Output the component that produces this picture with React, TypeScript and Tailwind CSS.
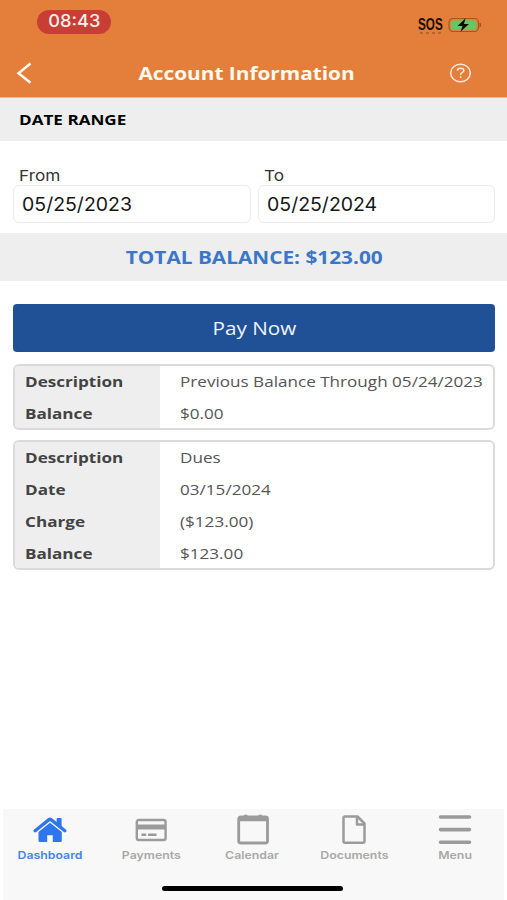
const cards = [
  [
    { label: "Description", value: "Previous Balance Through 05/24/2023" },
    { label: "Balance", value: "$0.00" },
  ],
  [
    { label: "Description", value: "Dues" },
    { label: "Date", value: "03/15/2024" },
    { label: "Charge", value: "($123.00)" },
    { label: "Balance", value: "$123.00" },
  ],
];

const HomeIcon = () => (
  <svg className="h-7 w-[34px]" viewBox="0 0 34 28" fill="#2f75ee">
    <path d="M23.6 3q0-1 1-1h3q1 0 1 1V12l-5-4.3z" />
    <path
      d="M2.2 14.7 16 3.6q1-.8 2 0l13.800 11.100"
      fill="none"
      stroke="#2f75ee"
      strokeWidth="3.300"
      strokeLinecap="round"
      strokeLinejoin="round"
    />
    <path d="M17 6.800 28.800 16v8.700q0 1.300-1.500 1.300h-7.500v-6.800h-5.600v6.800H7Q5.500 26 5.500 24.700V16z" />
  </svg>
);

const CardIcon = () => (
  <svg className="h-7 w-[34px]" viewBox="0 0 34 28" fill="#9b9b9b">
    <rect x="2.800" y="4" width="28.800" height="20" rx="2" fill="none" stroke="#9b9b9b" strokeWidth="2.400" />
    <path d="M2 8.600h30v5H2zM7.500 17.400h4.700v2.600H7.500zM14 17.400h8.500v2.600H14z" />
  </svg>
);

const CalendarIcon = () => (
  <svg className="h-8 w-[34px]" viewBox="0 0 34 32" fill="#9b9b9b">
    <rect x="2.700" y="3" width="28.800" height="26" rx="2" fill="none" stroke="#9b9b9b" strokeWidth="2.800" />
    <path d="M3 2.500h28v4.700H3zM8 .8h3.500v3H8zM22.500.8H26v3h-3.500z" />
  </svg>
);

const DocumentIcon = () => (
  <svg className="h-8 w-[26px]" viewBox="0 0 26 32" fill="none" stroke="#9b9b9b" strokeWidth="2.500" strokeLinejoin="round">
    <path d="M4 2.500h12.500l7 7v17.700q0 1.500-1.500 1.500H4q-1.500 0-1.500-1.500V4Q2.500 2.500 4 2.500z" />
    <path d="M16 2.500v8h7.500" />
  </svg>
);

const MenuIcon = () => (
  <svg className="h-8 w-[34px]" viewBox="0 0 34 32" stroke="#9b9b9b" strokeWidth="3.600" strokeLinecap="round">
    <path d="M2.500 3h29M2.500 15.600h29M2.500 28.200h29" />
  </svg>
);

const tabs = [
  { name: "Dashboard", icon: <HomeIcon />, color: "text-[#4584ee]" },
  { name: "Payments", icon: <CardIcon />, color: "text-[#a9a9a9]" },
  { name: "Calendar", icon: <CalendarIcon />, color: "text-[#a9a9a9]" },
  { name: "Documents", icon: <DocumentIcon />, color: "text-[#a9a9a9]" },
  { name: "Menu", icon: <MenuIcon />, color: "text-[#a9a9a9]" },
];

const DateField = ({ label, value }: { label: string; value: string }) => (
  <div className="flex-1">
    <div className="h-[21px] pl-1.5 font-[Inter,sans-serif] text-[15px] leading-[23px] text-[#333]">
      <span className="inline-block origin-left scale-x-[1.15]">{label}</span>
    </div>
    <div className="h-[38px] rounded-md border border-[#ebebeb] pl-2 font-[Inter,sans-serif] text-[19px] leading-[37px] text-[#171717]">
      <span className="inline-block origin-left scale-x-[1.025]">{value}</span>
    </div>
  </div>
);

export default function App() {
  return (
    <div className="flex h-[900px] w-[507px] flex-col overflow-hidden bg-white font-['Open_Sans',sans-serif]">
      <header className="h-[98px] shrink-0 border-b border-[#d9bfae] bg-[#e37f3a]">
        <div className="flex h-[49px] items-start justify-between pr-[25px] pl-[37px]">
          <div className="mt-[10px] flex h-6 w-[74px] items-center justify-center rounded-full bg-[#c83e35] font-[Inter,sans-serif] text-[17px] font-medium text-[#fff0e8]">
            <span className="scale-x-[1.07]">08:43</span>
          </div>
          <div className="mt-[16px] flex items-start">
            <div className="mr-[6px] w-[25px] pl-px">
              <div className="h-[15px] font-['Liberation_Sans',sans-serif] text-[16px] leading-[17px] font-bold text-[#1c0d03]">
                <span className="inline-block origin-left scale-x-[0.73]">SOS</span>
              </div>
              <div className="mt-px flex gap-[3px] pl-[2px]">
                <i className="h-[2px] w-[3px] bg-[#b8652c]" />
                <i className="h-[2px] w-[3px] bg-[#b8652c]" />
                <i className="h-[2px] w-[3px] bg-[#b8652c]" />
                <i className="h-[2px] w-[3px] bg-[#b8652c]" />
              </div>
            </div>
            <svg className="mt-px h-4 w-[34px]" viewBox="0 0 34 16">
              <rect x="1" y="1.500" width="29.500" height="13" rx="4" fill="none" stroke="#a4581f" strokeWidth="1.200" />
              <rect x="3" y="3.200" width="25.500" height="9.600" rx="2.500" fill="#68c564" />
              <path d="M32 6q1.500 2 0 4z" fill="#a4581f" stroke="#a4581f" />
              <path d="M17.500 1.200 9.500 9h5l-2 5.800L21 7h-5z" fill="#160b03" />
            </svg>
          </div>
        </div>
        <div className="flex h-[48px] items-center justify-between pr-[35px] pl-[16px]">
          <svg className="h-[22px] w-4" viewBox="0 0 16 22" fill="none" stroke="#fff8f0" strokeWidth="2.500">
            <path d="M14.500 1.500 2.500 11.300l12 9.500" />
          </svg>
          <h1 className="ml-[12px] text-lg font-bold text-[#fff8ee]">
            <span className="inline-block scale-x-[1.155]">Account Information</span>
          </h1>
          <svg className="h-5 w-[23px]" viewBox="0 0 23 20" fill="none" stroke="#ffe9d8" strokeWidth="1.500">
            <ellipse cx="11.500" cy="10" rx="9.800" ry="8.800" />
            <path d="M8.300 7.800q.2-2.600 3.300-2.600 3.300 0 3.300 2.300 0 1.300-1.800 2.200-1.500.8-1.500 2.200M11.600 13.300v1.600" />
          </svg>
        </div>
      </header>

      <div className="h-[43px] shrink-0 bg-[#eeeeee] pl-[19px] text-[15px] leading-[43px] font-bold text-black">
        <span className="inline-block origin-left scale-x-[1.14]">DATE RANGE</span>
      </div>

      <div className="flex gap-[7px] px-3 pt-[23px] pl-[13px]">
        <DateField label="From" value="05/25/2023" />
        <DateField label="To" value="05/25/2024" />
      </div>

      <div className="mt-[10px] h-12 shrink-0 bg-[#eeeeee] pl-px text-center text-lg leading-[49px] font-bold text-[#3b76c9]">
        <span className="inline-block scale-x-[1.155]">TOTAL BALANCE: $123.00</span>
      </div>

      <button className="mt-[23px] mr-3 ml-[13px] h-12 shrink-0 rounded bg-[#205196] text-lg text-[#eef4ff]">
        <span className="inline-block scale-x-[1.15]">Pay Now</span>
      </button>

      <div className="mt-3 mr-3 ml-[13px] flex flex-col gap-[10px]">
        {cards.map((rows, i) => (
          <div key={i} className="overflow-hidden rounded-md border-2 border-[#dcd9d9]">
            {rows.map((row) => (
              <div
                key={row.label}
                className="flex h-8 text-[15px] leading-8 whitespace-nowrap first:-mt-px last:-mb-px"
              >
                <div className="w-[145px] bg-[#eeeeee] pl-[10px] font-bold text-[#434343]">
                  <span className="inline-block origin-left scale-x-[1.14]">{row.label}</span>
                </div>
                <div className="pl-5 text-[#555]">
                  <span className="inline-block origin-left scale-x-[1.14]">{row.value}</span>
                </div>
              </div>
            ))}
          </div>
        ))}
      </div>

      <nav className="mx-[3px] mt-auto flex h-[91px] shrink-0 flex-col bg-[#f8f8f8]">
        <div className="-mr-[2px] -ml-[4px] flex">
          {tabs.map((tab) => (
            <div key={tab.name} className={"flex flex-1 flex-col items-center " + tab.color}>
              <div className="flex h-[37px] items-center pt-1">{tab.icon}</div>
              <span className="scale-x-[1.12] font-[Inter,sans-serif] text-[11px] leading-[18px] font-semibold">
                {tab.name}
              </span>
            </div>
          ))}
        </div>
        <div className="mx-auto mt-auto mb-[9px] h-[5px] w-[181px] -translate-x-px rounded-full bg-black" />
      </nav>
    </div>
  );
}
